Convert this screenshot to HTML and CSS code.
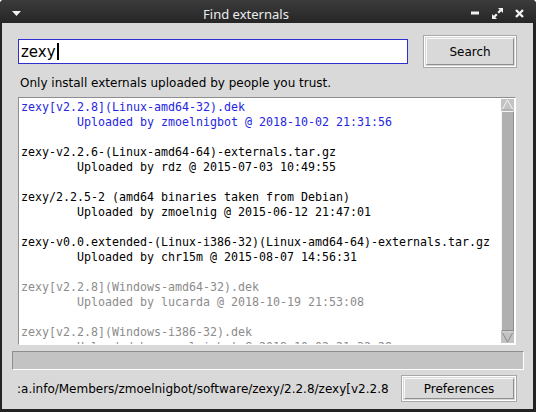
FILE: index.html
```html
<!DOCTYPE html>
<html>
<head>
<meta charset="utf-8">
<link rel="stylesheet" href="styles.css">
</head>
<body>
<div class="window">
  <div class="titlebar">
    <svg class="menu-ico" width="9" height="5" viewBox="0 0 9 5"><path d="M0 0H9L4.5 5Z" fill="#f0f0f0"/></svg>
    <div class="title">Find externals</div>
    <div class="wbtns">
      <svg width="9" height="4" viewBox="0 0 9 4"><rect x="0" y="0.5" width="8" height="3" fill="#f0f0f0"/></svg>
      <svg width="11" height="11" viewBox="0 0 11 11"><path d="M6 0H11V5L9.3 3.3 7 5.6 5.4 4 7.7 1.7Z M0 6V11H5L3.3 9.3 5.6 7 4 5.4 1.7 7.7Z" fill="#f0f0f0"/></svg>
      <svg width="9" height="9" viewBox="0 0 9 9"><path d="M1 1L8 8M8 1L1 8" stroke="#f0f0f0" stroke-width="2.4"/></svg>
    </div>
  </div>
  <div class="client">
    <div class="search-row">
      <div class="entry"><span class="entry-text">zexy</span><span class="caret"></span></div>
      <div class="btn search-btn"><span>Search</span></div>
    </div>
    <div class="hint">Only install externals uploaded by people you trust.</div>
    <div class="listbox">
      <div class="list">
        <div class="item blue">zexy[v2.2.8](Linux-amd64-32).dek
        Uploaded by zmoelnigbot @ 2018-10-02 21:31:56</div>
        <div class="item">zexy-v2.2.6-(Linux-amd64-64)-externals.tar.gz
        Uploaded by rdz @ 2015-07-03 10:49:55</div>
        <div class="item">zexy/2.2.5-2 (amd64 binaries taken from Debian)
        Uploaded by zmoelnig @ 2015-06-12 21:47:01</div>
        <div class="item">zexy-v0.0.extended-(Linux-i386-32)(Linux-amd64-64)-externals.tar.gz
        Uploaded by chr15m @ 2015-08-07 14:56:31</div>
        <div class="item grey">zexy[v2.2.8](Windows-amd64-32).dek
        Uploaded by lucarda @ 2018-10-19 21:53:08</div>
        <div class="item grey">zexy[v2.2.8](Windows-i386-32).dek
        Uploaded by zmoelnigbot @ 2018-10-02 21:32:29</div>
      </div>
      <div class="scrollbar">
        <div class="arrow up"><svg width="13" height="12" viewBox="0 0 13 12"><path d="M1 11L6.5 1 12 11Z" fill="#c3c3c3" stroke="#f4f4f4" stroke-width="1"/><path d="M1 11H12" stroke="#8a8a8a"/></svg></div>
        <div class="slider"></div>
        <div class="arrow down"><svg width="13" height="12" viewBox="0 0 13 12"><path d="M1 1L6.5 11 12 1Z" fill="#c3c3c3" stroke="#8a8a8a" stroke-width="1"/><path d="M1 1H12" stroke="#f4f4f4"/></svg></div>
      </div>
    </div>
    <div class="progress"></div>
    <div class="bottom-row">
      <div class="status">:a.info/Members/zmoelnigbot/software/zexy/2.2.8/zexy[v2.2.8</div>
      <div class="btn pref-btn"><span>Preferences</span></div>
    </div>
  </div>
</div>
</body>
</html>
```

FILE: styles.css
```css
html, body {
  margin: 0;
  padding: 0;
  background: #ffffff;
}
.window {
  width: 536px;
  height: 412px;
  display: flex;
  flex-direction: column;
  background: #232323;
  border-radius: 4px 4px 0 0;
  overflow: hidden;
}
.titlebar {
  height: 23px;
  flex: none;
  display: flex;
  align-items: center;
  background: linear-gradient(#3b3b3b, #262626);
}
.menu-ico {
  margin-left: 12px;
  margin-top: 4px;
}
.title {
  flex: 1;
  text-align: center;
  font-family: "Noto Sans", "DejaVu Sans", sans-serif;
  font-size: 13px;
  color: #ececec;
  margin-top: 4px;
}
.wbtns {
  display: flex;
  align-items: center;
  gap: 12px;
  margin-right: 12px;
  margin-top: 3px;
}
.client {
  flex: 1;
  margin: 0 3px 3px 2px;
  background: #d9d9d9;
  display: flex;
  flex-direction: column;
  font-family: "DejaVu Sans", sans-serif;
  font-size: 12px;
  color: #000;
}
.search-row {
  display: flex;
  align-items: center;
  padding: 12px 0 0 16px;
}
.entry {
  width: 386px;
  height: 23px;
  border: 1px solid #2f2fd0;
  background: #fff;
  display: flex;
  align-items: center;
  padding-left: 2px;
  box-sizing: content-box;
}
.entry-text {
  font-family: "DejaVu Sans", sans-serif;
  font-size: 15px;
  line-height: 18px;
}
.caret {
  width: 2px;
  height: 17px;
  background: #000;
  margin-left: 1px;
}
.btn {
  box-sizing: border-box;
  border: 1px solid #a8a8a8;
  box-shadow: inset 1px 1px 0 #ffffff, inset -1px -1px 0 #ffffff;
  display: flex;
  padding: 2px;
  background: #d9d9d9;
}
.btn span {
  flex: 1;
  display: flex;
  align-items: center;
  justify-content: center;
  border: 1px solid #8e8e8e;
  border-top-color: #f8f8f8;
  border-left-color: #f8f8f8;
}
.search-btn {
  width: 94px;
  height: 33px;
  margin-left: 15px;
}
.hint {
  padding: 8px 0 0 18px;
  line-height: 15px;
  height: 21px;
}
.listbox {
  margin-left: 16px;
  width: 498px;
  height: 248px;
  box-sizing: border-box;
  border: 1px solid #8e8e8e;
  border-right-color: #ffffff;
  border-bottom-color: #ffffff;
  background: #fff;
  display: flex;
}
.list {
  flex: 1;
  overflow: hidden;
  padding: 2px 0 0 2px;
  font-family: "DejaVu Sans Mono", monospace;
  font-size: 11.63px;
  line-height: 15px;
  color: #000;
}
.item {
  white-space: pre;
  margin-bottom: 15px;
}
.item.blue { color: #2626e0; }
.item.grey { color: #8c8c8c; }
.scrollbar {
  width: 13px;
  margin: 1px 1px 1px 0;
  background: #c3c3c3;
  display: flex;
  flex-direction: column;
}
.arrow {
  height: 12px;
  flex: none;
  display: flex;
}
.slider {
  flex: 1;
  background: #b0b0b0;
  border: 1px solid #8e8e8e;
  border-top-color: #f4f4f4;
  border-left-color: #f4f4f4;
}
.progress {
  margin: 6px 0 0 10px;
  width: 512px;
  height: 19px;
  box-sizing: border-box;
  background: #c3c3c3;
  border: 1px solid #8e8e8e;
  border-right-color: #ffffff;
  border-bottom-color: #ffffff;
}
.bottom-row {
  display: flex;
  align-items: center;
  padding: 5px 0 0 15px;
}
.status {
  width: 384px;
  overflow: hidden;
  white-space: nowrap;
  font-size: 12px;
}
.pref-btn {
  width: 116px;
  height: 27px;
}
```
